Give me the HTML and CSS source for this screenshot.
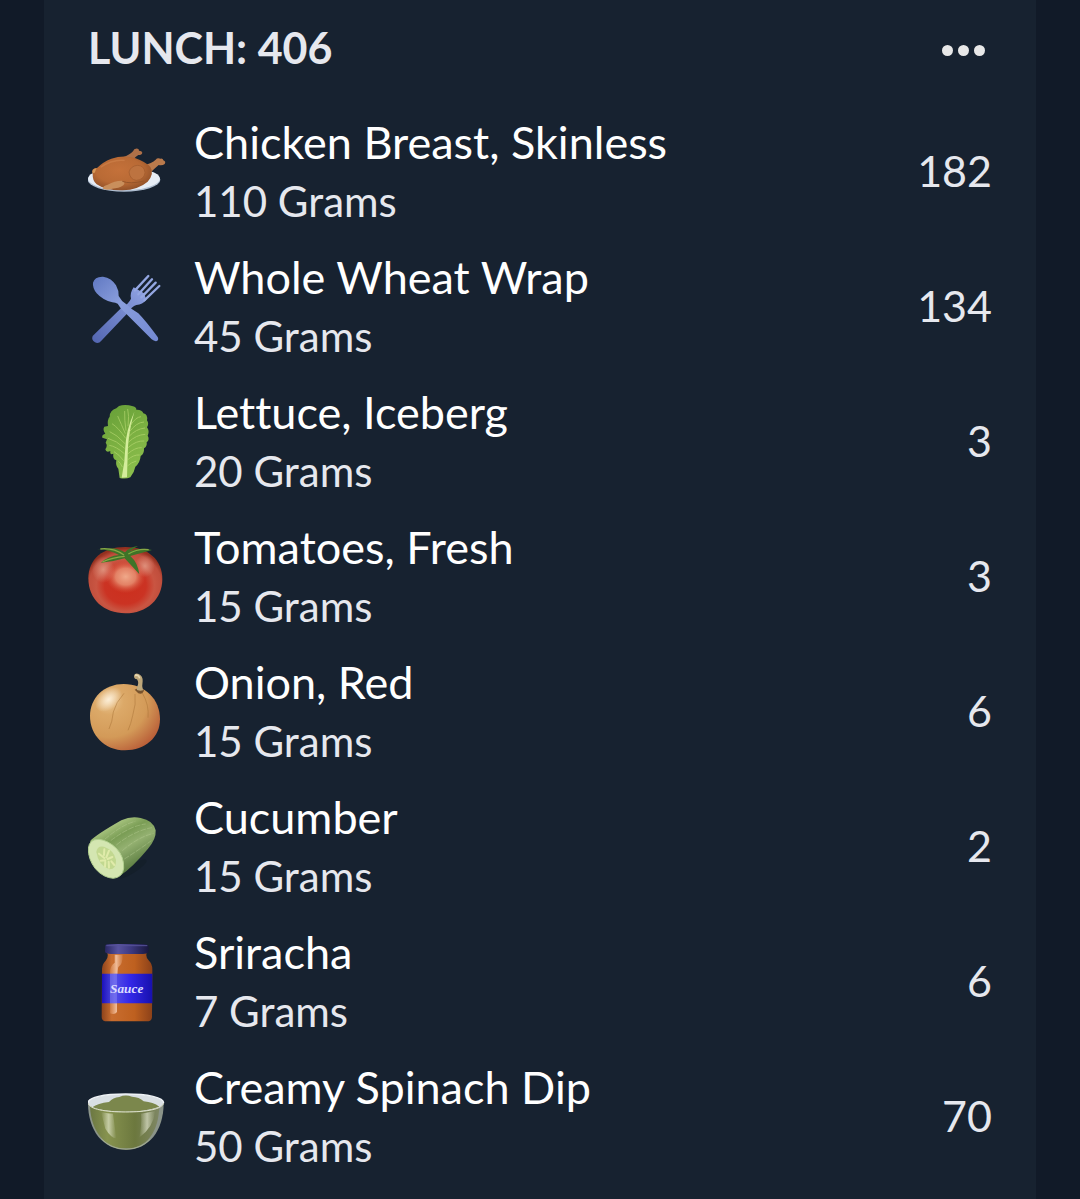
FILE: index.html
```html
<!DOCTYPE html>
<html lang="en">
  <head>
    <meta charset="UTF-8" />
    <meta name="viewport" content="width=device-width, initial-scale=1.0" />
    <title>Lunch</title>
    <link rel="stylesheet" href="styles.css">
  </head>
  <body>
    <main class="meal">
      <header class="meal-header">
        <h1>LUNCH: 406</h1>
        <button class="more" type="button" aria-label="More options">
          <span class="dot"></span>
          <span class="dot"></span>
          <span class="dot"></span>
        </button>
      </header>

      <ul class="foods">
        <li class="food">
          <svg class="icon" viewBox="39 8 240 240" aria-hidden="true">
            <defs>
              <radialGradient id="roast" cx="0.45" cy="0.4" r="0.65">
                <stop offset="0" stop-color="#c4713a" />
                <stop offset="0.6" stop-color="#b96a35" />
                <stop offset="1" stop-color="#8a4c26" />
              </radialGradient>
            </defs>
            <ellipse cx="147" cy="151" rx="109" ry="36" fill="#aebdd0" />
            <ellipse cx="147" cy="148" rx="108" ry="34" fill="#e6edf6" />
            <path d="M144 84 Q164 77 174 66 Q177 56 188 58 Q193 59 192 64 Q201 64 202 70 Q201 77 190 77 Q181 82 174 92 Z" fill="#ae7048" />
            <path d="M205 108 Q231 102 242 91 Q247 84 257 88 Q264 87 265 93 Q274 97 269 104 Q263 109 251 107 Q239 117 222 134 Z" fill="#b97a4c" />
            <path d="M53 134 Q47 116 66 116 Q83 98 109 88 Q145 76 180 86 Q215 99 226 113 Q239 133 218 157 Q190 181 143 183 Q92 184 65 165 Q52 154 53 134 Z" fill="url(#roast)" />
            <path d="M162 128 Q168 109 188 108 Q208 109 210 130 Q207 151 184 153 Q165 151 162 128 Z" fill="#bd7340" stroke="#a05b2e" stroke-width="2" />
            <path d="M53 132 Q48 120 65 116 L59 130 Z" fill="#d69858" />
            <path d="M84 178 Q83 169 98 166 Q121 153 142 154 Q153 159 145 168 Q131 178 112 178 Q97 184 84 178 Z" fill="#c98f5c" />
            <path d="M142 156 Q165 165 207 155" fill="none" stroke="#96552a" stroke-width="3" />
            <path d="M77 114 Q110 90 149 93" fill="none" stroke="#d0844c" stroke-width="4" opacity="0.6" />
          </svg>
          <div class="details">
            <h2>Chicken Breast, Skinless</h2>
            <p>110 Grams</p>
          </div>
          <span class="calories">182</span>
        </li>

        <li class="food">
          <svg class="icon" viewBox="39 21 240 240" aria-hidden="true">
            <defs>
              <linearGradient id="steel" x1="0" y1="0" x2="1" y2="1">
                <stop offset="0" stop-color="#6078c2" />
                <stop offset="0.4" stop-color="#8a9edc" />
                <stop offset="1" stop-color="#7389d2" />
              </linearGradient>
              <linearGradient id="handle" x1="1" y1="0" x2="0" y2="1">
                <stop offset="0" stop-color="#91a4e4" />
                <stop offset="1" stop-color="#5265b0" />
              </linearGradient>
            </defs>
            <path d="M53 228 Q48 240 60 247 Q71 252 79 242 L158 159 Q170 139 184 135 Q203 133 214 119 L207 100 L176 82 Q164 99 168 116 Q160 133 141 142 Z" fill="url(#handle)" />
            <path d="M180 91 L220 48 M190 103 L231 58 M199 112 L242 68 M208 121 L253 78" fill="none" stroke="#94a7e2" stroke-width="7" stroke-linecap="round" />
            <path d="M54 68 Q59 49 84 50 Q110 54 123 76 Q132 92 131 108 Q139 124 154 133 Q170 149 190 160 Q211 181 248 231 Q252 239 246 243 Q238 245 230 238 L152 160 Q136 146 128 131 Q122 128 112 127 Q84 121 65 100 Q52 83 54 68 Z" fill="url(#steel)" />
          </svg>
          <div class="details">
            <h2>Whole Wheat Wrap</h2>
            <p>45 Grams</p>
          </div>
          <span class="calories">134</span>
        </li>

        <li class="food">
          <svg class="icon" viewBox="39 21 240 240" aria-hidden="true">
            <defs>
              <linearGradient id="leaf" x1="0" y1="0" x2="0.4" y2="1">
                <stop offset="0" stop-color="#659e38" />
                <stop offset="0.5" stop-color="#79ae40" />
                <stop offset="1" stop-color="#8abd4c" />
              </linearGradient>
            </defs>
            <path d="M132 33 Q151 27 174 34 Q184 36 184 44 Q201 43 205 55 Q219 58 216 76 Q223 86 216 97 Q225 109 218 122 Q225 133 215 142 Q217 154 207 160 Q208 177 197 183 Q195 204 181 215 Q178 232 166 247 Q152 253 134 249 L130 221 Q121 213 124 196 Q112 192 115 176 Q104 181 106 168 Q93 174 91 163 Q99 151 92 143 L96 133 L82 128 Q79 119 91 116 Q82 104 88 95 L99 93 Q96 75 104 65 Q105 45 124 40 Z" fill="url(#leaf)" />
            <path d="M140 248 Q150 202 151 156 Q153 105 178 50 Q163 103 159 154 Q157 213 156 247 Z" fill="#d4ed9b" />
            <g fill="none" stroke="#bcdc75" stroke-width="3" opacity="0.6">
              <path d="M151 116 Q139 88 128 63 M153 107 Q148 75 149 48 M159 94 Q163 62 158 42" />
              <path d="M152 130 Q130 98 111 86 M150 146 Q126 119 104 110 M149 160 Q125 137 99 130 M148 176 Q123 154 103 151" />
              <path d="M165 93 Q182 66 198 65 M162 112 Q184 82 207 81 M160 126 Q184 101 210 99 M160 142 Q184 119 211 118 M159 158 Q184 136 208 138 M158 177 Q180 157 200 158 M157 195 Q177 178 194 180" />
              <path d="M146 197 Q132 178 117 170 M142 216 Q136 203 130 199 M157 213 Q169 202 184 198" />
            </g>
          </svg>
          <div class="details">
            <h2>Lettuce, Iceberg</h2>
            <p>20 Grams</p>
          </div>
          <span class="calories">3</span>
        </li>

        <li class="food">
          <svg class="icon" viewBox="39 21 240 240" aria-hidden="true">
            <defs>
              <radialGradient id="tomato" cx="0.5" cy="0.58" r="0.56">
                <stop offset="0" stop-color="#cc2e1d" />
                <stop offset="0.5" stop-color="#cb3323" />
                <stop offset="0.7" stop-color="#c95542" />
                <stop offset="0.88" stop-color="#c04e3c" />
                <stop offset="1" stop-color="#93301f" />
              </radialGradient>
              <radialGradient id="tomatoShine">
                <stop offset="0" stop-color="#f0a98a" />
                <stop offset="0.5" stop-color="#e99677" stop-opacity="0.8" />
                <stop offset="1" stop-color="#d5563f" stop-opacity="0" />
              </radialGradient>
              <radialGradient id="tomatoSpot">
                <stop offset="0" stop-color="#e5a28d" stop-opacity="0.75" />
                <stop offset="1" stop-color="#e5a28d" stop-opacity="0" />
              </radialGradient>
            </defs>
            <path d="M40 145 C40 88 82 51 151 51 C220 51 262 90 262 147 C262 208 215 250 151 250 C86 250 40 208 40 145 Z" fill="url(#tomato)" />
            <ellipse cx="152" cy="140" rx="60" ry="50" fill="url(#tomatoShine)" />
            <ellipse cx="85" cy="119" rx="34" ry="40" fill="url(#tomatoSpot)" />
            <ellipse cx="210" cy="108" rx="30" ry="34" fill="url(#tomatoSpot)" />
            <path d="M149 85 Q166 103 193 133 Q188 97 166 78 L231 60 Q191 51 163 64 Q175 56 189 48 Q164 50 150 67 Q120 50 95 57 L64 58 Q99 57 132 75 Q100 78 78 98 Q112 96 149 85 Z" fill="#3e7428" />
            <path d="M76 57 Q113 52 147 75 M160 72 Q188 55 221 59 M82 96 Q112 82 149 79" fill="none" stroke="#88a846" stroke-width="4" />
          </svg>
          <div class="details">
            <h2>Tomatoes, Fresh</h2>
            <p>15 Grams</p>
          </div>
          <span class="calories">3</span>
        </li>

        <li class="food">
          <svg class="icon" viewBox="39 20 240 240" aria-hidden="true">
            <defs>
              <radialGradient id="onion" cx="0.27" cy="0.25" r="0.85">
                <stop offset="0" stop-color="#ecc793" />
                <stop offset="0.25" stop-color="#dca968" />
                <stop offset="0.65" stop-color="#d39a58" />
                <stop offset="1" stop-color="#b95e38" />
              </radialGradient>
              <radialGradient id="onionShine">
                <stop offset="0" stop-color="#fff5e3" stop-opacity="0.85" />
                <stop offset="1" stop-color="#fff5e3" stop-opacity="0" />
              </radialGradient>
            </defs>
            <path d="M45 152 C45 97 88 56 146 56 C210 56 255 102 255 162 C255 217 210 255 150 255 C88 255 45 209 45 152 Z" fill="url(#onion)" />
            <ellipse cx="101" cy="102" rx="46" ry="30" fill="url(#onionShine)" transform="rotate(-40 101 102)" />
            <g fill="none" stroke="#a97236" stroke-width="2" opacity="0.75">
              <path d="M147 84 Q122 112 115 140 Q112 170 102 191" />
              <path d="M180 86 Q184 116 173 151 Q168 176 159 195" />
              <path d="M202 83 Q223 119 219 157" />
            </g>
            <path d="M179 73 Q191 65 207 74 Q204 88 190 84 Z" fill="#77522d" />
            <path d="M185 67 Q194 53 186 42 Q176 40 177 31 Q180 22 191 26 Q204 32 203 48 Q200 61 204 75 Q196 78 186 74 Z" fill="#bea77a" />
            <path d="M180 30 Q191 27 194 39" fill="none" stroke="#e8d9b3" stroke-width="5" />
          </svg>
          <div class="details">
            <h2>Onion, Red</h2>
            <p>15 Grams</p>
          </div>
          <span class="calories">6</span>
        </li>

        <li class="food">
          <svg class="icon" viewBox="39 20 240 240" aria-hidden="true">
            <defs>
              <linearGradient id="cucumber" x1="0.25" y1="0.1" x2="0.7" y2="0.8">
                <stop offset="0" stop-color="#b5cf8b" />
                <stop offset="0.35" stop-color="#7a9d55" />
                <stop offset="0.6" stop-color="#93b070" />
                <stop offset="1" stop-color="#5f8044" />
              </linearGradient>
            </defs>
            <ellipse cx="172" cy="206" rx="50" ry="12" fill="#141f2a" transform="rotate(-32 172 206)" />
            <path d="M45 123 Q60 105 139 60 Q169 46 197 53 Q235 60 242 90 Q244 117 219 145 Q174 200 133 228 Z" fill="url(#cucumber)" />
            <g fill="none" stroke="#b6cd92" stroke-width="3" stroke-dasharray="17 4" opacity="0.45">
              <path d="M89 117 Q142 72 181 63 M107 121 Q166 76 212 71 M124 134 Q178 91 231 82 M142 151 Q189 110 236 99 M148 176 Q188 151 229 121" />
            </g>
            <path d="M40 144 Q43 116 72 117 Q99 120 124 144 Q148 169 146 204 Q143 231 115 234 Q85 232 61 205 Q39 176 40 144 Z" fill="#d4e6b1" stroke="#b2d08f" stroke-width="3" />
            <path d="M64 155 Q66 135 87 139 Q116 149 123 178 Q124 208 103 207 Q70 195 64 155 Z" fill="#c2d890" />
            <path d="M88 147 L87 164 M102 151 L94 171 M72 160 L88 173 M112 170 L98 176 M77 181 L91 180 M101 184 L102 202 M109 183 L118 194 M91 185 L90 199" fill="none" stroke="#e0ebaa" stroke-width="6" stroke-linecap="round" />
          </svg>
          <div class="details">
            <h2>Cucumber</h2>
            <p>15 Grams</p>
          </div>
          <span class="calories">2</span>
        </li>

        <li class="food">
          <svg class="icon" viewBox="39 33 240 240" aria-hidden="true">
            <defs>
              <linearGradient id="sauce">
                <stop offset="0" stop-color="#8e431b" />
                <stop offset="0.2" stop-color="#c86d2f" />
                <stop offset="0.65" stop-color="#be601f" />
                <stop offset="1" stop-color="#8c4119" />
              </linearGradient>
              <linearGradient id="label">
                <stop offset="0" stop-color="#1b11bc" />
                <stop offset="0.25" stop-color="#5550e5" />
                <stop offset="0.55" stop-color="#3428e8" />
                <stop offset="1" stop-color="#1710ae" />
              </linearGradient>
              <linearGradient id="lid">
                <stop offset="0" stop-color="#292761" />
                <stop offset="0.3" stop-color="#58539f" />
                <stop offset="0.6" stop-color="#3d3980" />
                <stop offset="1" stop-color="#19183d" />
              </linearGradient>
              <linearGradient id="jarShine">
                <stop offset="0" stop-color="#f0b58d" stop-opacity="0.2" />
                <stop offset="0.5" stop-color="#f4c4a4" stop-opacity="0.9" />
                <stop offset="1" stop-color="#f0b58d" stop-opacity="0.2" />
              </linearGradient>
            </defs>
            <path d="M97 65 L215 65 Q211 81 222 89 Q232 98 232 115 L231 258 Q230 269 221 271 L90 271 Q80 268 80 258 L81 113 Q82 98 92 89 Q101 80 97 65 Z" fill="url(#sauce)" />
            <path d="M119 71 L143 71 Q144 99 130 108 Q126 117 126 243 Q119 253 105 247 L105 118 Q107 104 119 95 Z" fill="url(#jarShine)" />
            <path d="M81 128 L232 128 L232 217 L81 217 Z" fill="url(#label)" />
            <path d="M105 128 L126 128 L126 217 L105 217 Z" fill="#a4a0ff" opacity="0.35" />
            <path d="M91 43 Q94 38 107 39 L205 39 Q219 40 221 46 L221 64 Q216 69 204 69 L108 69 Q93 68 90 63 Z" fill="url(#lid)" />
            <path d="M94 44 L217 44" stroke="#56529a" stroke-width="3" />
            <text class="jar-text" x="155" y="185" text-anchor="middle">Sauce</text>
          </svg>
          <div class="details">
            <h2>Sriracha</h2>
            <p>7 Grams</p>
          </div>
          <span class="calories">6</span>
        </li>

        <li class="food">
          <svg class="icon" viewBox="39 3 240 240" aria-hidden="true">
            <defs>
              <linearGradient id="dip">
                <stop offset="0" stop-color="#6b7742" />
                <stop offset="0.25" stop-color="#87934f" />
                <stop offset="0.65" stop-color="#6c783e" />
                <stop offset="1" stop-color="#7f8765" />
              </linearGradient>
              <linearGradient id="glass">
                <stop offset="0" stop-color="#e9edda" stop-opacity="0" />
                <stop offset="0.5" stop-color="#f0f3df" stop-opacity="0.6" />
                <stop offset="1" stop-color="#e9edda" stop-opacity="0" />
              </linearGradient>
            </defs>
            <path d="M39 80 C39 165 85 221 153 221 C221 221 266 165 266 80 Z" fill="#8b9489" />
            <path d="M45 92 C49 168 90 217 153 217 C216 217 250 168 253 92 Z" fill="url(#dip)" />
            <path d="M39 80 C39 65 85 54 152 54 C219 54 266 65 266 80 C266 95 219 108 152 108 C85 108 39 95 39 80 Z" fill="#d9dfe3" />
            <path d="M52 94 Q68 82 102 78 Q114 64 133 63 Q151 55 171 62 Q193 63 206 76 Q235 79 253 92 Q210 107 153 107 Q94 108 52 94 Z" fill="#7b874c" />
            <path d="M78 108 Q100 113 114 113 L124 187 Q108 186 91 158 Z" fill="url(#glass)" />
            <path d="M198 113 L241 105 Q235 155 192 185 Q201 148 198 113 Z" fill="url(#glass)" />
            <path d="M39 82 C45 100 90 108 152 108 C214 108 260 100 266 82" fill="none" stroke="#dce0c8" stroke-width="3" />
            <path d="M39 81 C39 64 85 54 152 54 C219 54 266 64 266 81" fill="none" stroke="#eef2f5" stroke-width="4" />
            <path d="M79 188 Q107 219 154 220 Q199 218 225 190" fill="none" stroke="#b1ba8d" stroke-width="3" opacity="0.6" />
          </svg>
          <div class="details">
            <h2>Creamy Spinach Dip</h2>
            <p>50 Grams</p>
          </div>
          <span class="calories">70</span>
        </li>
      </ul>
    </main>
  </body>
</html>
```

FILE: styles.css
```css
* {
  box-sizing: border-box;
}

body {
  margin: 0;
  padding: 0 44px;
  background-color: #111a28;
  color: #e6e8ee;
  font-family: Lato, "Noto Sans", sans-serif;
  font-variant-ligatures: none;
}

.meal {
  min-height: 100vh;
  padding: 0 44px 14px;
  background-color: #172230;
}

/* Header */
.meal-header {
  display: flex;
  align-items: center;
  justify-content: space-between;
  height: 104px;
  padding-bottom: 4px;
}

.meal-header h1 {
  margin: 0;
  padding-bottom: 4px;
  font-size: 43px;
  line-height: 96px;
  font-weight: bold;
}

.more {
  display: flex;
  gap: 5px;
  padding: 20px 7px;
  border: none;
  background: none;
  cursor: pointer;
}

.dot {
  width: 11px;
  height: 11px;
  border-radius: 50%;
  background-color: #e8e8e8;
}

/* Food list */
.foods {
  margin: 0;
  padding: 0;
  list-style: none;
}

.food {
  display: flex;
  align-items: center;
  height: 135px;
}

.icon {
  flex: none;
  width: 80px;
  height: 80px;
  margin-right: 26px;
}

.details {
  flex: 1;
}

.details h2,
.details p {
  margin: 0;
  font-weight: normal;
  line-height: 59px;
}

.details h2 {
  color: #fff;
  font-size: 45px;
}

.details p {
  font-size: 42px;
}

.calories {
  padding-bottom: 2px;
  font-size: 43px;
}

.jar-text {
  fill: #dcdcff;
  font-family: "Liberation Serif", serif;
  font-size: 40px;
  font-style: italic;
  font-weight: bold;
}
```
